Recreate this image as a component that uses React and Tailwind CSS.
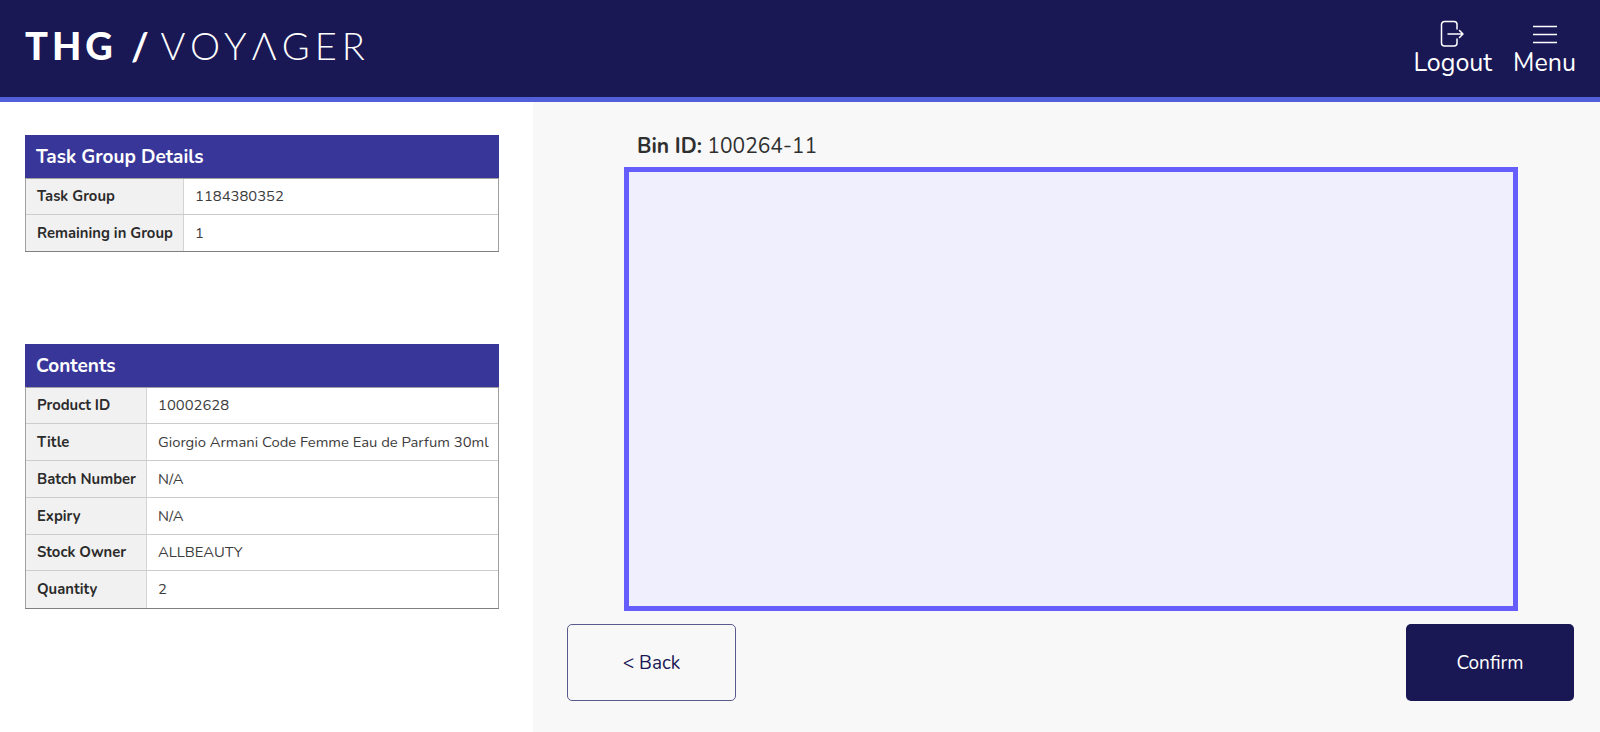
const taskRows = [
  ["Task Group", "1184380352", "h-[35px]"],
  ["Remaining in Group", "1", "h-[37px]"],
];

const contentRows = [
  ["Product ID", "10002628", "h-[35px]"],
  ["Title", "Giorgio Armani Code Femme Eau de Parfum 30ml", "h-[37px]"],
  ["Batch Number", "N/A", "h-[37px]"],
  ["Expiry", "N/A", "h-[37px]"],
  ["Stock Owner", "ALLBEAUTY", "h-[36px]"],
  ["Quantity", "2", "h-[38px]"],
];

function InfoTable({ title, rows, labelWidth }) {
  return (
    <div className="w-[474px] border-b border-b-[#808080]">
      <div className="h-[44px] bg-[#393699] pl-[11px] pt-[1px] flex items-center text-[19px] font-bold text-white border-b border-b-[#a0a0a0]">
        {title}
      </div>
      <div className="border-x border-x-[#a0a0a0]">
        {rows.map(([label, value, height], i) => (
          <div key={label} className={`flex ${height} ${i > 0 ? "border-t border-t-[#cccccc]" : ""}`}>
            <div className={`${labelWidth} shrink-0 bg-[#f1f1f1] border-r border-r-[#d4d4d4] pl-[11px] flex items-center text-[14.8px] font-bold text-[#2b2b2b] whitespace-nowrap`}>
              {label}
            </div>
            <div className="flex-1 pl-[11px] flex items-center text-[14.8px] text-[#3c3c3c] whitespace-nowrap">
              {value}
            </div>
          </div>
        ))}
      </div>
    </div>
  );
}

export default function App() {
  return (
    <div className="h-[732px] flex flex-col font-['Nunito','Noto_Sans',sans-serif] overflow-hidden">
      {/* Header */}
      <header className="h-[102px] shrink-0 bg-[#191754] border-b-[5px] border-b-[#5160d8] flex items-center justify-between pl-[25px] pr-[24px] text-white">
        <div className="flex items-baseline font-['Lato',sans-serif] text-[38px] leading-none mt-[-8px] whitespace-nowrap">
          <span className="font-black tracking-[4px]">THG</span>
          <span className="font-bold ml-[14px]">/</span>
          <span className="font-light tracking-[5.1px] ml-[12px]">VOYΛGER</span>
        </div>
        <div className="flex items-start gap-[21px]">
          <button className="flex flex-col items-center text-[25px] leading-[30px]">
            <svg width="25" height="28" viewBox="0 0 25 28" fill="none" stroke="white" strokeWidth="1.5" strokeLinecap="round" strokeLinejoin="round">
              <path d="M17 9V4.500a3 3 0 0 0-3-3H4.500a3 3 0 0 0-3 3v18.500a3 3 0 0 0 3 3H14a3 3 0 0 0 3-3v-4" />
              <path d="M8 14h15M19.500 10.500l3.500 3.500-3.500 3.500" />
            </svg>
            <span>Logout</span>
          </button>
          <button className="flex flex-col items-center text-[25px] leading-[30px]">
            <svg width="24" height="28" viewBox="0 0 24 28" fill="none" stroke="white" strokeWidth="1.5">
              <path d="M0 6.500h24M0 14.500h24M0 22.500h24" />
            </svg>
            <span>Menu</span>
          </button>
        </div>
      </header>

      <div className="flex-1 flex">
        {/* Left column */}
        <aside className="w-[533px] shrink-0 bg-white pl-[25px] pt-[33px] flex flex-col gap-[92px]">
          <InfoTable title="Task Group Details" rows={taskRows} labelWidth="w-[158px]" />
          <InfoTable title="Contents" rows={contentRows} labelWidth="w-[121px]" />
        </aside>

        {/* Bin panel */}
        <main className="flex-1 bg-[#f8f8f8] flex flex-col">
          <div className="ml-[104px] mt-[31px] h-[34px] text-[21px] leading-[27px] text-[#2f2f2f]">
            <span className="font-bold">Bin ID:</span> 100264-11
          </div>
          <div className="ml-[91px] w-[894px] h-[444px] border-[5px] border-[#655dfc] bg-[#f0effe]"></div>
          <div className="mt-[13px] ml-[34px] mr-[26px] flex justify-between">
            <button className="w-[169px] h-[77px] pt-[1px] rounded-[5px] border border-[#5b5a8f] text-[19px] text-[#191754]">
              &lt; Back
            </button>
            <button className="w-[168px] h-[77px] pt-[1px] rounded-[5px] bg-[#191754] text-[19px] text-white">
              Confirm
            </button>
          </div>
        </main>
      </div>
    </div>
  );
}
